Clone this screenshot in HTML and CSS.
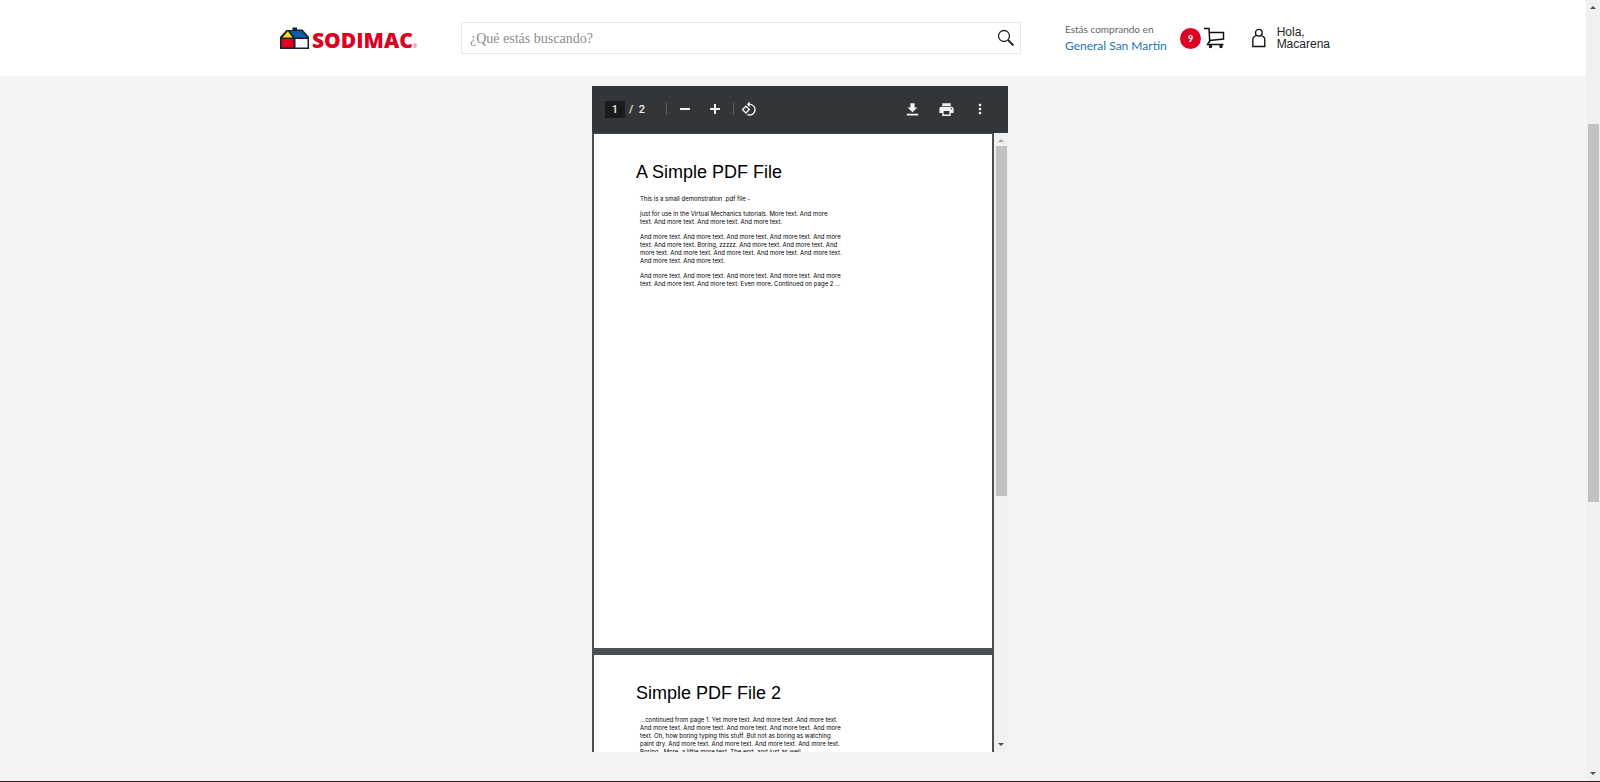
FILE: index.html
```
<!DOCTYPE html>
<html lang="es">
<head>
<meta charset="utf-8">
<title>Sodimac</title>
<link rel="stylesheet" href="styles.css">
</head>
<body>
<header class="header">
  <div class="header-inner">
    <a class="logo" href="#">
      <svg class="logo-house" viewBox="0 0 29 22" aria-hidden="true">
        <path d="M0 10 6.500 3H12.500V0.500H17V2.500H22.500L29 10V22H0Z" fill="#17212b"/>
        <path d="M2.500 10.500 7.800 4.200 12.500 10.500Z" fill="#fbe11c"/>
        <path d="M10 4H22L27 10.500H14.500Z" fill="#0b5cab"/>
        <path d="M1.500 12H13.500V20.500H1.500Z" fill="#e2001a"/>
        <path d="M15.500 12H27.500V20.500H15.500Z" fill="#fff"/>
      </svg>
      <span class="logo-name">SODIMAC</span><span class="logo-mark">®</span>
    </a>
    <form class="search">
      <input class="search-input" type="text" placeholder="¿Qué estás buscando?" aria-label="Buscar">
      <button class="search-button" type="button" aria-label="Buscar">
        <svg width="18" height="18" viewBox="0 0 18 18" fill="none" stroke="#222"><circle cx="7" cy="7" r="5.500" stroke-width="1.300"/><path d="M11 11 16.500 16.500" stroke-width="1.800"/></svg>
      </button>
    </form>
    <div class="store">
      <span class="store-label">Estás comprando en</span>
      <a class="store-name" href="#">General San Martin</a>
    </div>
    <a class="cart" href="#" aria-label="Carrito">
      <span class="cart-count">9</span>
      <svg width="22" height="22" viewBox="0 0 22 22" fill="none" stroke="#111" stroke-width="1.500"><path d="M0 1.500H5L5.800 15.500M5.200 5.500H19.500V12L5.500 13.500M5.800 13.500 3.500 17.500H19.500"/><circle cx="6.500" cy="19.500" r="1"/><circle cx="17" cy="19.500" r="1"/></svg>
    </a>
    <a class="user" href="#">
      <svg width="16" height="22" viewBox="0 0 16 22" fill="none" stroke="#111" stroke-width="1.600"><circle cx="8" cy="4.800" r="3.900"/><path d="M5 8.300C2 9 1 10.500 1 13V21H15V13C15 10.500 14 9 11 8.300"/></svg>
      <span class="user-name">Hola,<br>Macarena</span>
    </a>
  </div>
</header>
<main class="main">
  <section class="viewer" aria-label="Documento PDF">
    <div class="toolbar">
      <input class="page-input" type="text" value="1" aria-label="Página">
      <span class="page-total">/&nbsp; 2</span>
      <span class="divider"></span>
      <button class="tool" type="button" aria-label="Alejar"><svg width="16" height="16" viewBox="0 0 16 16"><path d="M3 7H13V9H3Z"/></svg></button>
      <button class="tool tool-plus" type="button" aria-label="Acercar"><svg width="16" height="16" viewBox="0 0 16 16"><path d="M3 7H7V3H9V7H13V9H9V13H7V9H3Z"/></svg></button>
      <span class="divider"></span>
      <button class="tool tool-rotate" type="button" aria-label="Girar"><svg width="16" height="16" viewBox="0 0 24 24"><path d="M7.340 6.410.860 12.900l6.490 6.480 6.490-6.480-6.500-6.490zM3.690 12.900l3.660-3.660L11 12.900l-3.660 3.660-3.650-3.660zm15.670-6.260C17.610 4.880 15.300 4 13 4V.760L8.760 5 13 9.240V6c1.790 0 3.580.680 4.950 2.050 2.730 2.730 2.730 7.170 0 9.900C16.580 19.320 14.790 20 13 20c-.970 0-1.940-.210-2.840-.610l-1.490 1.490C10.020 21.620 11.510 22 13 22c2.300 0 4.610-.880 6.360-2.640 3.520-3.510 3.520-9.210 0-12.720z"/></svg></button>
      <div class="tools-right">
        <button class="tool" type="button" aria-label="Descargar"><svg width="17" height="17" viewBox="0 0 24 24"><path d="M19 9h-4V3H9v6H5l7 7 7-7zM4 18v2.500h16v-2.500H4z"/></svg></button>
        <button class="tool" type="button" aria-label="Imprimir"><svg width="17" height="17" viewBox="0 0 24 24"><path d="M19 8H5c-1.660 0-3 1.340-3 3v6h4v4h12v-4h4v-6c0-1.660-1.340-3-3-3zm-3 11H8v-5h8v5zm3-7c-.550 0-1-.450-1-1s.450-1 1-1 1 .450 1 1-.450 1-1 1zm-1-9H6v4h12V3z"/></svg></button>
        <button class="tool" type="button" aria-label="Más acciones"><svg width="16" height="16" viewBox="0 0 24 24"><path d="M12 8c1.100 0 2-.900 2-2s-.900-2-2-2-2 .900-2 2 .900 2 2 2zm0 2c-1.100 0-2 .900-2 2s.900 2 2 2 2-.900 2-2-.900-2-2-2zm0 6c-1.100 0-2 .900-2 2s.900 2 2 2 2-.900 2-2-.900-2-2-2z"/></svg></button>
      </div>
    </div>
    <div class="document">
      <div class="pages">
        <article class="page">
          <h1 class="page-title">A Simple PDF File</h1>
          <p>This is a small demonstration .pdf file -</p>
          <p>just for use in the Virtual Mechanics tutorials. More text. And more<br>text. And more text. And more text. And more text.</p>
          <p>And more text. And more text. And more text. And more text. And more<br>text. And more text. Boring, zzzzz. And more text. And more text. And<br>more text. And more text. And more text. And more text. And more text.<br>And more text. And more text.</p>
          <p>And more text. And more text. And more text. And more text. And more<br>text. And more text. And more text. Even more. Continued on page 2 ...</p>
        </article>
        <article class="page">
          <h1 class="page-title">Simple PDF File 2</h1>
          <p>...continued from page 1. Yet more text. And more text. And more text.<br>And more text. And more text. And more text. And more text. And more<br>text. Oh, how boring typing this stuff. But not as boring as watching<br>paint dry. And more text. And more text. And more text. And more text.<br>Boring.&nbsp; More, a little more text. The end, and just as well.</p>
        </article>
      </div>
      <div class="scrollbar" aria-hidden="true">
        <svg class="arrow arrow-light" viewBox="0 0 6 4"><path d="M0 4 3 1 6 4Z"/></svg>
        <div class="track"><div class="thumb thumb-document"></div></div>
        <svg class="arrow" viewBox="0 0 6 4"><path d="M0 0 3 3 6 0Z"/></svg>
      </div>
    </div>
  </section>
</main>
<div class="scrollbar window-scrollbar" aria-hidden="true">
  <svg class="arrow" viewBox="0 0 6 4"><path d="M0 4 3 1 6 4Z"/></svg>
  <div class="track"><div class="thumb thumb-window"></div></div>
  <svg class="arrow" viewBox="0 0 6 4"><path d="M0 0 3 3 6 0Z"/></svg>
</div>
</body>
</html>
```
FILE: styles.css
```
* { box-sizing: border-box; }

body {
  display: flex;
  flex-direction: column;
  height: 100vh;
  margin: 0;
  overflow: hidden;
  background: #f4f4f4;
  border-bottom: 1px solid #2a1a24;
  font-family: "Liberation Sans", Arial, sans-serif;
}

a { color: inherit; text-decoration: none; }
button { padding: 0; border: 0; background: none; }

/* Header */
.header { flex: none; background: #fff; }
.header-inner {
  display: flex;
  align-items: center;
  max-width: 1060px;
  height: 76px;
  margin: 0 auto;
  padding-left: 10px;
}
.logo { display: flex; align-items: center; width: 181px; color: #dc0023; }
.logo-house { width: 29px; height: 22px; margin-right: 3px; }
.logo-name { font: 800 21px/24px "Open Sans", sans-serif; padding-top: 3px; }
.logo-mark { align-self: flex-end; font-size: 6px; line-height: 12px; }

.search {
  display: flex;
  flex: 1;
  height: 32px;
  border: 1px solid #e8e8e8;
}
.search-input {
  flex: 1;
  min-width: 0;
  padding: 2px 8px 0;
  border: 0;
  background: none;
  font: 14px "Liberation Serif", serif;
}
.search-input::placeholder { color: #8c8c8c; opacity: 1; }
.search-button { display: flex; align-items: center; padding: 0 5px 0 6px; }

.store {
  display: flex;
  flex-direction: column;
  width: 115px;
  margin-left: 44px;
  font-family: Lato, sans-serif;
  white-space: nowrap;
}
.store-label { color: #666; font-size: 10px; line-height: 16px; }
.store-name { color: #2273b9; font-size: 12px; line-height: 18px; }

.cart { display: flex; align-items: center; gap: 3px; width: 72px; }
.cart-count {
  width: 21px;
  height: 21px;
  border-radius: 50%;
  background: #dc0023;
  color: #fff;
  font: 700 9px/21px Lato, sans-serif;
  text-align: center;
}

.user { display: flex; align-items: center; gap: 11px; width: 78px; }
.user-name { color: #222; font-size: 12px; line-height: 12px; }

/* Document viewer */
.main { display: flex; flex: 1; min-height: 0; justify-content: center; padding: 10px 0 29px; }
.viewer {
  display: flex;
  flex-direction: column;
  width: 416px;
  overflow: hidden;
}
.toolbar {
  display: flex;
  flex: none;
  align-items: center;
  height: 47px;
  padding: 0 20px 1px 13px;
  background: #323639;
  color: #f1f1f1;
  font: 500 11px Roboto, sans-serif;
}
.page-input {
  width: 20px;
  height: 17px;
  padding: 0;
  border: 0;
  background: #191b1c;
  color: inherit;
  font: inherit;
  text-align: center;
}
.page-total { width: 37px; padding-left: 4px; }
.divider { width: 1px; height: 12px; margin-left: 4px; background: #5f6365; }
.tool { display: flex; }
.tool svg { fill: #f1f1f1; }
.divider + .tool { margin-left: 10px; }
.tool-plus { margin: 0 6px 0 14px; }
.divider + .tool-rotate { margin-left: 7px; }
.tools-right { display: flex; align-items: center; gap: 17px; margin-left: auto; }

.document { display: flex; flex: 1; min-height: 0; }
.pages {
  display: flex;
  flex: 1;
  flex-direction: column;
  gap: 7px;
  padding: 1px 2px 0;
  overflow: hidden;
  background: #4b4f52;
}
.page {
  flex: none;
  min-height: 514px;
  padding: 28px 42px;
  background: #fff;
  color: #000;
  font: 6px/8px Inter, sans-serif;
  white-space: nowrap;
}
.page-title { margin: 0 0 13px; font: 18px/20px "Liberation Sans", Arial, sans-serif; }
.page p { margin: 0 0 7px; padding-left: 4px; }

/* Scrollbars */
.scrollbar {
  display: flex;
  flex-direction: column;
  align-items: center;
  width: 14px;
  padding: 5px 0;
  background: #f0f0f0;
}
.arrow { flex: none; width: 6px; height: 4px; fill: #505050; }
.arrow-light { fill: #a3a3a3; }
.track { flex: 1; margin: 4px 0; }
.thumb { width: 11px; background: #c1c1c1; }
.thumb-document { height: 59%; }
.thumb-window { height: 50%; margin-top: 111px; }
.window-scrollbar { position: absolute; top: 0; right: 0; bottom: 1px; }
```
